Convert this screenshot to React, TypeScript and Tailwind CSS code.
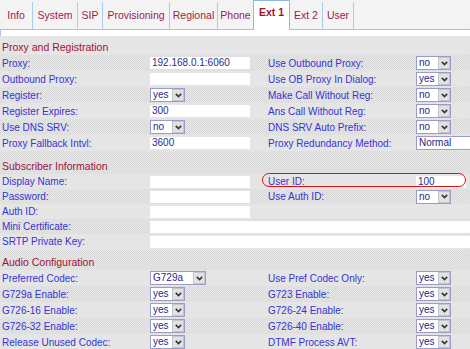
import React from "react";

type Field =
  | { kind: "input"; value?: string; w?: string }
  | { kind: "select"; value: string; w?: string }
  | null;

type Row = {
  left: string;
  leftField: Field;
  right?: string;
  rightField?: Field;
  wide?: boolean;
  mark?: boolean;
};

const tex =
  "bg-[#e0e0e0] bg-[image:repeating-conic-gradient(#d8d8d8_0_25%,#e8e8e8_0_50%)] bg-[length:2px_2px]";
const solid = "bg-[#e5e5e5]";

const tabs = [
  { name: "Info", w: "w-[33px]" },
  { name: "System", w: "w-[45px]" },
  { name: "SIP", w: "w-[25px]" },
  { name: "Provisioning", w: "w-[67px]" },
  { name: "Regional", w: "w-[48px]" },
  { name: "Phone", w: "w-[35px]", noSep: true },
  { name: "Ext 1", w: "w-[37px]", active: true },
  { name: "Ext 2", w: "w-[33px]" },
  { name: "User", w: "w-[31px]" },
];

const proxyRows: Row[] = [
  { left: "Proxy:", leftField: { kind: "input", value: "192.168.0.1:6060" }, right: "Use Outbound Proxy:", rightField: { kind: "select", value: "no" } },
  { left: "Outbound Proxy:", leftField: { kind: "input" }, right: "Use OB Proxy In Dialog:", rightField: { kind: "select", value: "yes" } },
  { left: "Register:", leftField: { kind: "select", value: "yes" }, right: "Make Call Without Reg:", rightField: { kind: "select", value: "no" } },
  { left: "Register Expires:", leftField: { kind: "input", value: "300" }, right: "Ans Call Without Reg:", rightField: { kind: "select", value: "no" } },
  { left: "Use DNS SRV:", leftField: { kind: "select", value: "no" }, right: "DNS SRV Auto Prefix:", rightField: { kind: "select", value: "no" } },
  { left: "Proxy Fallback Intvl:", leftField: { kind: "input", value: "3600" }, right: "Proxy Redundancy Method:", rightField: { kind: "select", value: "Normal", w: "w-[70px]" } },
];

const subRows: Row[] = [
  { left: "Display Name:", leftField: { kind: "input" }, right: "User ID:", rightField: { kind: "input", value: "100", w: "w-[50px]" }, mark: true },
  { left: "Password:", leftField: { kind: "input" }, right: "Use Auth ID:", rightField: { kind: "select", value: "no" } },
  { left: "Auth ID:", leftField: { kind: "input" } },
  { left: "Mini Certificate:", leftField: { kind: "input", w: "w-[320px]" }, wide: true },
  { left: "SRTP Private Key:", leftField: { kind: "input", w: "w-[320px]" }, wide: true },
];

const audioRows: Row[] = [
  { left: "Preferred Codec:", leftField: { kind: "select", value: "G729a", w: "w-[56px]" }, right: "Use Pref Codec Only:", rightField: { kind: "select", value: "yes" } },
  { left: "G729a Enable:", leftField: { kind: "select", value: "yes" }, right: "G723 Enable:", rightField: { kind: "select", value: "yes" } },
  { left: "G726-16 Enable:", leftField: { kind: "select", value: "yes" }, right: "G726-24 Enable:", rightField: { kind: "select", value: "yes" } },
  { left: "G726-32 Enable:", leftField: { kind: "select", value: "yes" }, right: "G726-40 Enable:", rightField: { kind: "select", value: "yes" } },
  { left: "Release Unused Codec:", leftField: { kind: "select", value: "yes" }, right: "DTMF Process AVT:", rightField: { kind: "select", value: "yes" } },
];

function Select({ value, w = "w-[35px]" }: { value: string; w?: string }) {
  return (
    <div className={`${w} h-[14px] flex shrink-0 border border-[#9c9cc8] bg-white`}>
      <span className="flex-1 pl-[2px] text-[10px] leading-[12px] text-[#1f1f8a] whitespace-nowrap overflow-hidden">
        {value}
      </span>
      <span className="w-[12px] h-[12px] flex items-center justify-center bg-[#e2e2e2] border border-[#c4c4cc]">
        <svg width="7" height="5" viewBox="0 0 7 5">
          <polyline points="0.8,0.8 3.5,3.6 6.2,0.8" fill="none" stroke="#3a3a3a" strokeWidth="1.7" />
        </svg>
      </span>
    </div>
  );
}

function Input({ value, w = "w-[100px]" }: { value?: string; w?: string }) {
  return (
    <div className={`${w} h-[12px] shrink-0 bg-white pl-[2px] text-[10px] leading-[12px] text-[#2c2c8a] whitespace-nowrap`}>
      {value}
    </div>
  );
}

function FieldView({ f }: { f?: Field }) {
  if (!f) return null;
  if (f.kind === "select") return <Select value={f.value} w={f.w} />;
  return <Input value={f.value} w={f.w} />;
}

function FormRow({ row, h, bg }: { row: Row; h: string; bg: string }) {
  return (
    <div className={`relative grid grid-cols-[150px_118px_148px_1fr] items-center ${h} ${bg}`}>
      <span className="pl-[2px] text-[10px] text-[#3434d4] whitespace-nowrap">{row.left}</span>
      {row.wide ? (
        <div className="col-span-3">
          <FieldView f={row.leftField} />
        </div>
      ) : (
        <>
          <div>
            <FieldView f={row.leftField} />
          </div>
          <span className="text-[10px] text-[#3434d4] whitespace-nowrap">{row.right}</span>
          <div>
            <FieldView f={row.rightField} />
          </div>
        </>
      )}
      {row.mark && (
        <div className="absolute left-[262px] top-[-1px] w-[204px] h-[14px] rounded-[7px] border-[1.5px] border-[#e01010]" />
      )}
    </div>
  );
}

function Section({
  title,
  rows,
  rowH,
  gap,
  firstTex,
}: {
  title: string;
  rows: Row[];
  rowH: string;
  gap: string;
  firstTex: boolean;
}) {
  const headBg = firstTex ? solid : tex;
  return (
    <div>
      <div className={`${gap} ${headBg}`} />
      <div className={`h-[15px] flex items-center pl-[2px] text-[10.5px] text-[#a0103a] ${headBg}`}>{title}</div>
      {rows.map((r, i) => {
        const t = firstTex ? i % 2 === 0 : i % 2 === 1;
        return <FormRow key={r.left} row={r} h={rowH} bg={t ? tex : solid} />;
      })}
    </div>
  );
}

export default function App() {
  return (
    <div className="w-[470px] h-[349px] overflow-hidden bg-[#e2e2e2] font-['Liberation_Sans',Arial,sans-serif]">
      <div className="h-[30px] flex items-end border-b border-[#9ec5ea] bg-[#f3f3f3] bg-[image:repeating-conic-gradient(#eeeeee_0_25%,#f9f9f9_0_50%)] bg-[length:2px_2px]">
        {tabs.map((t) =>
          t.active ? (
            <div
              key={t.name}
              className={`${t.w} h-[30px] -mb-px flex justify-center pt-[4px] bg-white border-x border-t border-[#8fb8e4] text-[10.5px] font-bold text-[#a0102e]`}
            >
              {t.name}
            </div>
          ) : (
            <div
              key={t.name}
              className={`${t.w} h-[27px] flex items-center justify-center ${t.noSep ? "" : "border-r border-[#aacdee]"} text-[10.5px] text-[#a01a4e]`}
            >
              {t.name}
            </div>
          )
        )}
      </div>
      <div className="h-[6px] bg-white border-l border-[#9ec5ea]" />
      <Section title="Proxy and Registration" rows={proxyRows} rowH="h-[16px]" gap="h-[4px]" firstTex={true} />
      <Section title="Subscriber Information" rows={subRows} rowH="h-[15px]" gap="h-[8px]" firstTex={false} />
      <Section title="Audio Configuration" rows={audioRows} rowH="h-[16px]" gap="h-[6px]" firstTex={false} />
    </div>
  );
}
